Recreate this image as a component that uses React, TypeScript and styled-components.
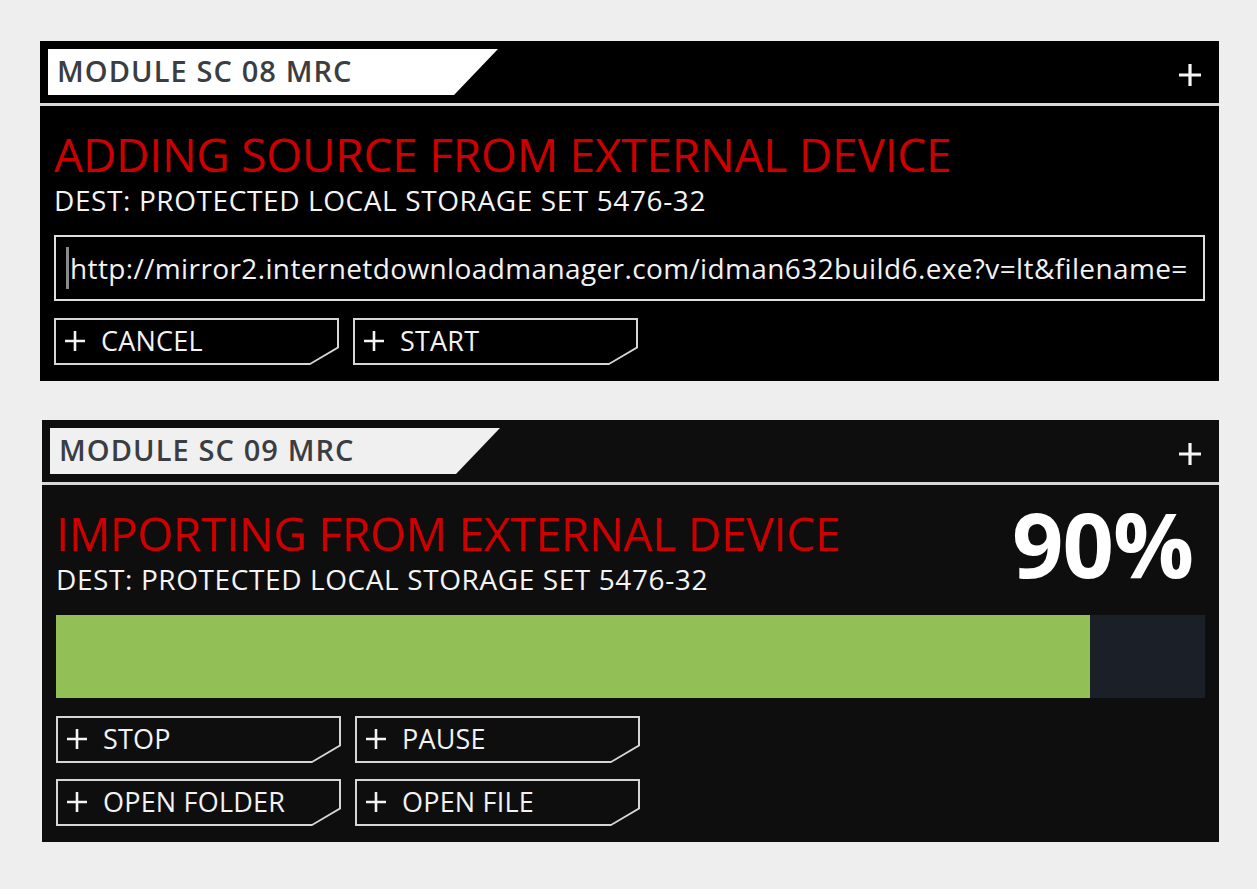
import React from 'react';
import styled, { createGlobalStyle } from 'styled-components';

const GlobalStyle = createGlobalStyle`
  html, body {
    margin: 0;
    padding: 0;
    background: #eeeeee;
  }
  body {
    font-family: "Open Sans", "Noto Sans", "DejaVu Sans", sans-serif;
  }
`;

const Page = styled.div`
  display: flex;
  flex-direction: column;
  gap: 39px;
  padding: 41px 38px 40px 40px;
`;

const Panel = styled.section<{ $bg: string; $indent?: number }>`
  background: ${({ $bg }) => $bg};
  margin-left: ${({ $indent }) => $indent ?? 0}px;
  display: flex;
  flex-direction: column;
`;

const Header = styled.header`
  height: 65px;
  display: flex;
  align-items: flex-start;
  justify-content: space-between;
  padding: 8px 17px 0 8px;
  box-sizing: border-box;
  border-bottom: 3px solid #d8d8d8;
`;

const Tab = styled.div<{ $fill: string }>`
  width: 450px;
  height: 46px;
  background: ${({ $fill }) => $fill};
  clip-path: polygon(0 0, 100% 0, calc(100% - 44px) 100%, 0 100%);
  display: flex;
  align-items: center;
  padding: 0 0 3px 9px;
  box-sizing: border-box;
  color: #3a3d42;
  font-size: 29px;
  font-weight: 600;
  letter-spacing: 1.1px;
`;

const HeaderPlus = styled.svg`
  margin-top: 14px;
`;

const Body = styled.div`
  padding: 20px 14px 16px 14px;
  display: flex;
  flex-direction: column;
`;

const TitleRow = styled.div`
  display: flex;
  justify-content: space-between;
  align-items: flex-start;
`;

const Title = styled.h1`
  margin: 0;
  color: #cc0000;
  font-size: 46px;
  font-weight: 400;
  line-height: 56px;
  letter-spacing: -0.2px;
`;

const Dest = styled.div`
  color: #f4f4f4;
  font-size: 28px;
  line-height: 32px;
  letter-spacing: 0.6px;
  margin-top: 2px;
`;

const Percent = styled.div`
  color: #ffffff;
  font-size: 90px;
  font-weight: 700;
  line-height: 88px;
  letter-spacing: -1px;
  margin: -6px 12px 0 0;
`;

const UrlBox = styled.div`
  margin-top: 19px;
  height: 66px;
  border: 2px solid #dedede;
  box-sizing: border-box;
  display: flex;
  align-items: center;
  padding-left: 10px;
  overflow: hidden;
  white-space: nowrap;
  color: #f2f2f2;
  font-size: 28px;
  letter-spacing: 0.38px;
`;

const Caret = styled.span`
  display: inline-block;
  width: 3px;
  height: 42px;
  background: #8a8a8a;
  margin-right: 1px;
  flex-shrink: 0;
`;

const Progress = styled.div`
  margin-top: 20px;
  height: 83px;
  background: #1b1f27;
  display: flex;
`;

const Fill = styled.div`
  background: #92c057;
  height: 100%;
`;

const ButtonGrid = styled.div<{ $top: number }>`
  margin-top: ${({ $top }) => $top}px;
  display: grid;
  grid-template-columns: repeat(2, 285px);
  column-gap: 14px;
  row-gap: 16px;
`;

const CutOuter = styled.button`
  height: 47px;
  box-sizing: border-box;
  margin: 0;
  padding: 2px;
  border: none;
  background: #d6d6d6;
  clip-path: polygon(0 0, 100% 0, 100% calc(100% - 17px), calc(100% - 29px) 100%, 0 100%);
  cursor: pointer;
  display: flex;
`;

const CutInner = styled.span<{ $bg: string }>`
  flex: 1;
  background: ${({ $bg }) => $bg};
  clip-path: polygon(0 0, 100% 0, 100% calc(100% - 16px), calc(100% - 27px) 100%, 0 100%);
  display: flex;
  align-items: center;
  gap: 15px;
  padding: 0 0 2px 8px;
  color: #f2f2f2;
  font-family: "Open Sans", "Noto Sans", sans-serif;
  font-size: 27px;
  letter-spacing: 0.2px;
`;

const Plus = ({ size = 22, stroke = 2.5 }: { size?: number; stroke?: number }) => (
  <svg width={size} height={size} viewBox="0 0 22 22">
    <path d="M11 1v20M1 11h20" stroke="#f4f4f4" strokeWidth={stroke} fill="none" />
  </svg>
);

const CutButton = ({ label, bg }: { label: string; bg: string }) => (
  <CutOuter>
    <CutInner $bg={bg}>
      <Plus size={22} stroke={2.6} />
      {label}
    </CutInner>
  </CutOuter>
);

const PanelHeader = ({ name, fill }: { name: string; fill: string }) => (
  <Header>
    <Tab $fill={fill}>{name}</Tab>
    <HeaderPlus width="24" height="24" viewBox="0 0 24 24">
      <path d="M12 1v22M1 12h22" stroke="#f6f6f6" strokeWidth="3.2" fill="none" />
    </HeaderPlus>
  </Header>
);

const App: React.FC = () => {
  const progress = 90;
  return (
    <>
      <GlobalStyle />
      <Page>
        <Panel $bg="#000000">
          <PanelHeader name="MODULE SC 08 MRC" fill="#ffffff" />
          <Body>
            <Title>ADDING SOURCE FROM EXTERNAL DEVICE</Title>
            <Dest>DEST: PROTECTED LOCAL STORAGE SET 5476-32</Dest>
            <UrlBox>
              <Caret />
              http://mirror2.internetdownloadmanager.com/idman632build6.exe?v=lt&amp;filename=
            </UrlBox>
            <ButtonGrid $top={17}>
              <CutButton label="CANCEL" bg="#000000" />
              <CutButton label="START" bg="#000000" />
            </ButtonGrid>
          </Body>
        </Panel>

        <Panel $bg="#0e0e0e" $indent={2}>
          <PanelHeader name="MODULE SC 09 MRC" fill="#f0f0f0" />
          <Body>
            <TitleRow>
              <div>
                <Title>IMPORTING FROM EXTERNAL DEVICE</Title>
                <Dest>DEST: PROTECTED LOCAL STORAGE SET 5476-32</Dest>
              </div>
              <Percent>{progress}%</Percent>
            </TitleRow>
            <Progress>
              <Fill style={{ width: `${progress}%` }} />
            </Progress>
            <ButtonGrid $top={18}>
              <CutButton label="STOP" bg="#0e0e0e" />
              <CutButton label="PAUSE" bg="#0e0e0e" />
              <CutButton label="OPEN FOLDER" bg="#0e0e0e" />
              <CutButton label="OPEN FILE" bg="#0e0e0e" />
            </ButtonGrid>
          </Body>
        </Panel>
      </Page>
    </>
  );
};

export default App;
